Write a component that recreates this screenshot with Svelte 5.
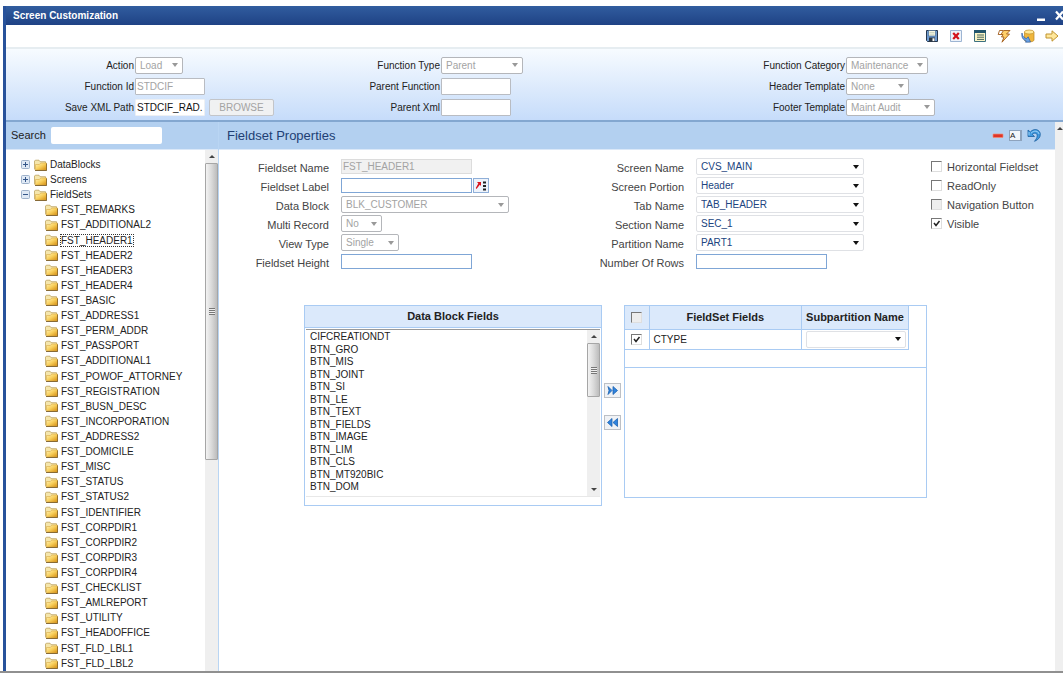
<script lang="ts">
  /**
   * Screen Customization: header form, object tree and fieldset properties.
   */
  type Option = { id: string; label: string; value: string; width: number };

  const roots = ['DataBlocks', 'Screens', 'FieldSets'];
  const fieldsets = [
    'FST_REMARKS', 'FST_ADDITIONAL2', 'FST_HEADER1', 'FST_HEADER2', 'FST_HEADER3',
    'FST_HEADER4', 'FST_BASIC', 'FST_ADDRESS1', 'FST_PERM_ADDR', 'FST_PASSPORT',
    'FST_ADDITIONAL1', 'FST_POWOF_ATTORNEY', 'FST_REGISTRATION', 'FST_BUSN_DESC',
    'FST_INCORPORATION', 'FST_ADDRESS2', 'FST_DOMICILE', 'FST_MISC', 'FST_STATUS',
    'FST_STATUS2', 'FST_IDENTIFIER', 'FST_CORPDIR1', 'FST_CORPDIR2', 'FST_CORPDIR3',
    'FST_CORPDIR4', 'FST_CHECKLIST', 'FST_AMLREPORT', 'FST_UTILITY', 'FST_HEADOFFICE',
    'FST_FLD_LBL1', 'FST_FLD_LBL2'
  ];
  const blockFields = [
    'CIFCREATIONDT', 'BTN_GRO', 'BTN_MIS', 'BTN_JOINT', 'BTN_SI', 'BTN_LE', 'BTN_TEXT',
    'BTN_FIELDS', 'BTN_IMAGE', 'BTN_LIM', 'BTN_CLS', 'BTN_MT920BIC', 'BTN_DOM'
  ];
  const templates: Option[] = [
    { id: 'category', label: 'Function Category', value: 'Maintenance', width: 82 },
    { id: 'header-tpl', label: 'Header Template', value: 'None', width: 63 },
    { id: 'footer-tpl', label: 'Footer Template', value: 'Maint Audit', width: 89 }
  ];
  const blockOptions: Option[] = [
    { id: 'data-block', label: 'Data Block', value: 'BLK_CUSTOMER', width: 168 },
    { id: 'multi-record', label: 'Multi Record', value: 'No', width: 41 },
    { id: 'view-type', label: 'View Type', value: 'Single', width: 58 }
  ];
  const placement = [
    { id: 'screen-name', label: 'Screen Name', value: 'CVS_MAIN' },
    { id: 'screen-portion', label: 'Screen Portion', value: 'Header' },
    { id: 'tab-name', label: 'Tab Name', value: 'TAB_HEADER' },
    { id: 'section-name', label: 'Section Name', value: 'SEC_1' },
    { id: 'partition-name', label: 'Partition Name', value: 'PART1' }
  ];

  let selected = $state('FST_HEADER1');
  let flags = $state([
    { label: 'Horizontal Fieldset', on: false, disabled: false },
    { label: 'ReadOnly', on: false, disabled: false },
    { label: 'Navigation Button', on: false, disabled: true },
    { label: 'Visible', on: true, disabled: false }
  ]);
</script>

{#snippet folder()}
  <svg class="folder" viewBox="0 0 13 12" aria-hidden="true">
    <defs>
      <linearGradient id="fold" x1="0" y1="0" x2="1" y2="1">
        <stop offset="0" stop-color="#fff3b8" />
        <stop offset=".5" stop-color="#f8cf5c" />
        <stop offset="1" stop-color="#d48c10" />
      </linearGradient>
    </defs>
    <path d="M.5 10.5V2L1.300 1.200H5l1 1.500h5.500v2" fill="#f5e6ac" stroke="#b59a52" stroke-width=".7" />
    <path d="M1.500 11V5.500h3.800L6.800 4h5.700v7z" fill="url(#fold)" stroke="#d9a945" stroke-width=".6" />
    <path d="M1 11.500h11.700V4.500" fill="none" stroke="#6b4a10" stroke-width=".8" />
  </svg>
{/snippet}

<main class="screen">
  <div class="window">
    <header class="titlebar">
      <h1>Screen Customization</h1>
      <button type="button" class="plain" aria-label="Minimize">
        <svg width="8" height="12" viewBox="0 0 8 12"><path d="M0 8.5h8v2.5H0z" fill="#fff" /></svg>
      </button>
      <button type="button" class="plain" aria-label="Close">
        <svg width="8" height="12" viewBox="0 0 8 12"><path d="m1 1.500 7 8m0-8-7 8" stroke="#fff" stroke-width="2.2" /></svg>
      </button>
    </header>

    <nav class="toolbar" aria-label="Actions">
      <button type="button" class="plain" aria-label="Save">
        <svg width="14" height="14" viewBox="0 0 14 14">
          <path d="M1.500 1.500h11v11h-10l-1-1z" fill="#6f9bd0" stroke="#24374f" />
          <path d="M3.500 1.500h7v5.500h-7z" fill="#f5f6e2" stroke="#38608f" stroke-width=".6" />
          <path d="M4.500 3.500h5m-5 1.700h5" stroke="#b5c2b0" stroke-width=".6" />
          <path d="M4 8.500h6v4H4z" fill="#2c3640" /><path d="M7.500 9.300h2v2.800h-2z" fill="#fff" />
        </svg>
      </button>
      <button type="button" class="plain" aria-label="Delete">
        <svg width="14" height="14" viewBox="0 0 14 14">
          <path d="M1.500 1.500h11v11h-11z" fill="#eef3fa" stroke="#9db5d3" />
          <path d="m4.200 4 5.600 6m0-6-5.600 6" stroke="#d3121b" stroke-width="2.200" />
        </svg>
      </button>
      <button type="button" class="plain" aria-label="Properties">
        <svg width="14" height="14" viewBox="0 0 14 14">
          <path d="M1.500 1.500h11v11h-11z" fill="#fdf5c6" stroke="#3c7080" />
          <path d="M1 1h12v3H1z" fill="#24566d" />
          <path d="M4 6h7M4 8.200h7M4 10.400h7" stroke="#47665f" />
        </svg>
      </button>
      <button type="button" class="plain" aria-label="Generate">
        <svg width="14" height="14" viewBox="0 0 14 14">
          <path d="M6.500 1.500H13L9.500 5h3L5 13.200 7 8H4.500L6 5.500H4z" fill="#ffd06a" stroke="#a05a18" stroke-width=".9" stroke-linejoin="round" />
          <path d="M6 1.500H2.500L1.200 5.500H4" fill="none" stroke="#a05a18" stroke-width=".9" />
        </svg>
      </button>
      <button type="button" class="plain" aria-label="Load from database">
        <svg width="14" height="14" viewBox="0 0 14 14">
          <path d="M3.500 3v8c0 2.500 9.500 2.500 9.500 0V3z" fill="#efb63c" stroke="#b98420" stroke-width=".7" />
          <ellipse cx="8.200" cy="3" rx="4.800" ry="2" fill="#ffe99a" stroke="#c08c24" stroke-width=".7" />
          <path d="M1 4c.5 3.500 2 5 4.500 5.500l1.700-1.700L9.500 13l-5 .2L5.300 12C2 11 .2 8 1 4z" fill="#6aa2e4" stroke="#2c5fa8" stroke-width=".7" />
        </svg>
      </button>
      <button type="button" class="plain" aria-label="Next">
        <svg width="14" height="14" viewBox="0 0 14 14">
          <path d="M1 5h6V1.800L13 7l-6 5.200V9H1z" fill="#ffe79a" stroke="#c09430" />
        </svg>
      </button>
    </nav>

    <form class="general">
      <div class="fields">
        <label for="action">Action</label>
        <select id="action" disabled style:width="48px"><option>Load</option></select>
        <label for="function-id">Function Id</label>
        <input id="function-id" type="text" value="STDCIF" disabled />
        <label for="xml-path">Save XML Path</label>
        <div class="pair">
          <input id="xml-path" type="text" value="STDCIF_RAD." />
          <button type="button" class="browse" disabled>BROWSE</button>
        </div>
      </div>
      <div class="fields">
        <label for="function-type">Function Type</label>
        <select id="function-type" disabled style:width="82px"><option>Parent</option></select>
        <label for="parent-function">Parent Function</label>
        <input id="parent-function" type="text" disabled />
        <label for="parent-xml">Parent Xml</label>
        <input id="parent-xml" type="text" disabled />
      </div>
      <div class="fields">
        {#each templates as t (t.id)}
          <label for={t.id}>{t.label}</label>
          <select id={t.id} disabled style:width="{t.width}px"><option>{t.value}</option></select>
        {/each}
      </div>
    </form>

    <div class="body">
      <aside>
        <div class="strip">
          <label for="search">Search</label>
          <input id="search" type="search" />
        </div>
        <div class="tree">
          <ul>
            {#each roots as root (root)}
              <li>
                <svg class="expander" viewBox="0 0 9 9" aria-hidden="true">
                  <rect x=".5" y=".5" width="8" height="8" rx="1" fill="#dfe9f5" stroke="#9fb2cb" />
                  <path d={root === 'FieldSets' ? 'M2 4.5h5' : 'M2 4.5h5M4.5 2v5'} stroke="#35578a" />
                </svg>
                {@render folder()}
                <button type="button" class="node">{root}</button>
              </li>
            {/each}
            {#each fieldsets as name (name)}
              <li class="child">
                {@render folder()}
                <button
                  type="button"
                  class="node"
                  class:selected={name === selected}
                  onclick={() => (selected = name)}
                >{name}</button>
              </li>
            {/each}
          </ul>
          <div class="scrollbar" aria-hidden="true">
            <i class="up"></i>
            <div class="thumb"><i class="grip"></i></div>
          </div>
        </div>
      </aside>

      <section class="details">
        <div class="strip heading">
          <h2>Fieldset Properties</h2>
          <button type="button" class="plain" aria-label="Remove">
            <svg width="12" height="14" viewBox="0 0 12 14"><rect x="1" y="6" width="10" height="3.500" rx=".5" fill="#df3528" stroke="#f28c72" stroke-width=".7" /></svg>
          </button>
          <button type="button" class="plain rename" aria-label="Rename"><span>A</span></button>
          <button type="button" class="plain" aria-label="Undo">
            <svg width="14" height="14" viewBox="0 0 14 14">
              <path d="M1 2v6.500h6.500L5.300 6.200C8 4 10.500 5.500 10.200 8c-.2 2-1.200 3.500-2.700 5.300C11 12 13.300 9.500 13.300 6.500c0-5-6.300-6.800-10-2.500z" fill="#3f9ae0" stroke="#1c5f9f" stroke-width=".8" />
              <path d="M2 4v3.300M4 5.200C7 2 11.500 2.800 12 6" fill="none" stroke="#a5d6f8" stroke-width=".9" />
            </svg>
          </button>
        </div>

        <form class="properties">
          <div class="fields">
            <label for="fs-name">Fieldset Name</label>
            <input id="fs-name" class="readonly" type="text" value="FST_HEADER1" disabled />
            <label for="fs-label">Fieldset Label</label>
            <div class="pair lookup">
              <input id="fs-label" type="text" />
              <button type="button" aria-label="Look up label">
                <svg width="13" height="12" viewBox="0 0 13 12">
                  <path d="M2 2h4v4L4.800 4.800 1.500 9 .8 8l2.500-4.500z" fill="#d8141c" />
                  <path d="M8 1.500h3v2H8zM8 5h3v2H8zM8 8.500h3v2H8z" fill="#222" />
                </svg>
              </button>
            </div>
            {#each blockOptions as o (o.id)}
              <label for={o.id}>{o.label}</label>
              <select id={o.id} disabled style:width="{o.width}px"><option>{o.value}</option></select>
            {/each}
            <label for="fs-height">Fieldset Height</label>
            <input id="fs-height" type="text" />
          </div>
          <div class="fields">
            {#each placement as p (p.id)}
              <label for={p.id}>{p.label}</label>
              <select id={p.id} class="live"><option>{p.value}</option></select>
            {/each}
            <label for="rows">Number Of Rows</label>
            <input id="rows" type="text" />
          </div>
          <div class="flags">
            {#each flags as flag (flag.label)}
              <label>
                <input type="checkbox" bind:checked={flag.on} disabled={flag.disabled} />
                {flag.label}
              </label>
            {/each}
          </div>
        </form>

        <div class="transfer">
          <div class="source">
            <h3 id="source-title">Data Block Fields</h3>
            <div class="listbox">
              <select multiple aria-labelledby="source-title">
                {#each blockFields as f (f)}
                  <option>{f}</option>
                {/each}
              </select>
              <div class="scrollbar" aria-hidden="true">
                <i class="up"></i>
                <div class="thumb"><i class="grip"></i></div>
                <i class="down"></i>
              </div>
            </div>
          </div>
          <div class="moves">
            <button type="button" aria-label="Add to fieldset">
              <svg width="11" height="9" viewBox="0 0 11 9"><path d="m1 .5 4 4-4 4 1-4zM6 .5l4.500 4-4.500 4z" fill="#2f83dd" stroke="#1c62b0" stroke-width=".8" /></svg>
            </button>
            <button type="button" aria-label="Remove from fieldset">
              <svg width="11" height="9" viewBox="0 0 11 9"><path d="M5 .5v8l-4.500-4zM10.500.5v8L6 4.500z" fill="#2f83dd" stroke="#1c62b0" stroke-width=".8" /></svg>
            </button>
          </div>
          <div class="target">
            <table>
              <thead>
                <tr>
                  <th class="tick"><input type="checkbox" aria-label="Select all" disabled /></th>
                  <th>FieldSet Fields</th>
                  <th class="sub">Subpartition Name</th>
                </tr>
              </thead>
              <tbody>
                <tr>
                  <td class="tick"><input type="checkbox" aria-label="Select CTYPE" checked /></td>
                  <td>CTYPE</td>
                  <td class="sub"><select class="live" aria-label="Subpartition name"><option></option></select></td>
                </tr>
              </tbody>
            </table>
            <div class="filler"></div>
          </div>
        </div>
      </section>

      <div class="scrollbar outer" aria-hidden="true"><i class="up"></i></div>
    </div>
  </div>
</main>

<style>
  :global(body) {
    background: #fff;
    font-family: 'Liberation Sans', Arial, sans-serif;
    font-size: 10px;
    color: #222;
  }

  .screen {
    box-sizing: border-box;
    min-height: 100vh;
    padding: 6px 0 0 3px;
    border-bottom: 2px solid #909090;
    display: flex;
    overflow: hidden;
  }

  .window {
    flex: 1;
    min-width: 0;
    border-left: 3px solid #28529b;
    display: flex;
    flex-direction: column;
  }

  h1,
  h2,
  h3 {
    margin: 0;
  }

  button,
  input,
  select {
    box-sizing: border-box;
    font: inherit;
    margin: 0;
  }

  .plain {
    display: block;
    border: 0;
    padding: 0;
    background: none;
    line-height: 0;
  }

  .titlebar {
    height: 19px;
    padding-left: 7px;
    display: flex;
    align-items: center;
    gap: 10px;
    background: linear-gradient(#315d9f, #1f4285);
    color: #fff;
  }

  .titlebar h1 {
    flex: 1;
    font-size: 10px;
    line-height: 16px;
  }

  .toolbar {
    height: 22px;
    padding-right: 4px;
    border-bottom: 2px solid #e6edf1;
    display: flex;
    justify-content: flex-end;
    align-items: center;
    gap: 10px;
    background: #fff;
  }

  .general {
    display: grid;
    grid-template-columns: 306fr 405fr 346fr;
    padding: 7px 0 4px;
    border-bottom: 2px solid #83a7d0;
    background: linear-gradient(#f7fbff, #c6dcfa);
  }

  .fields {
    display: grid;
    grid-template-columns: 128px 1fr;
    grid-auto-rows: 18px;
    row-gap: 3px;
    column-gap: 1px;
    align-items: center;
    justify-items: start;
  }

  .fields label {
    justify-self: end;
    white-space: nowrap;
  }

  input[type='text'] {
    width: 70px;
    height: 17px;
    padding: 0 1px;
    border: 1px solid #b9bcc2;
    border-radius: 1px;
    background: #fff;
    color: #111;
  }

  .general .pair input {
    border-color: #eef0f3;
  }

  input:disabled,
  select:disabled {
    color: #a3a3a3;
    opacity: 1;
  }

  select {
    appearance: none;
    height: 17px;
    padding: 0 14px 0 4px;
    border: 1px solid #b4b6ba;
    border-radius: 2px;
    background: #fff url("data:image/svg+xml,%3Csvg xmlns='http://www.w3.org/2000/svg' width='6' height='4'%3E%3Cpath d='M0 0h6L3 4z' fill='%23999'/%3E%3C/svg%3E") no-repeat right 4px center;
  }

  select.live {
    width: 168px;
    border-color: #dfe1e5;
    color: #204480;
    background-image: url("data:image/svg+xml,%3Csvg xmlns='http://www.w3.org/2000/svg' width='6' height='4'%3E%3Cpath d='M0 0h6L3 4z' fill='%23111'/%3E%3C/svg%3E");
  }

  .pair {
    display: flex;
    gap: 4px;
  }

  .browse {
    width: 65px;
    height: 17px;
    padding: 0;
    border: 1px solid #c3c5c9;
    border-radius: 2px;
    background: #f0f1f2;
    color: #a3a3a3;
  }

  .body {
    flex: 1;
    display: flex;
  }

  aside {
    width: 212px;
    display: flex;
    flex-direction: column;
    border-right: 1px solid #b9d5f3;
  }

  .strip {
    box-sizing: border-box;
    height: 28px;
    padding: 0 5px 1px;
    border-bottom: 1px solid #dbe8f8;
    display: flex;
    align-items: center;
    gap: 5px;
    background: #b3d0f0;
    font-size: 11px;
  }

  .strip input {
    width: 111px;
    height: 17px;
    border: 0;
    border-radius: 2px;
    background: #fff;
  }

  .tree {
    flex: 1;
    display: flex;
  }

  .tree ul {
    flex: 1;
    margin: 0;
    padding: 7px 0 0 15px;
    list-style: none;
    display: flex;
    flex-direction: column;
    justify-content: space-between;
  }

  .tree li {
    display: flex;
    align-items: center;
    gap: 2px;
    height: 15px;
  }

  .tree li.child {
    padding-left: 24px;
  }

  .folder {
    width: 13px;
    height: 12px;
  }

  .expander {
    width: 9px;
    height: 9px;
    margin-right: 2px;
  }

  .node {
    border: 1px solid transparent;
    padding: 0;
    background: none;
    color: #222;
    line-height: 11px;
    white-space: nowrap;
  }

  .node.selected {
    border: 1px dotted #333;
  }

  .scrollbar {
    width: 13px;
    flex: none;
    display: flex;
    flex-direction: column;
    align-items: center;
    background: #efefef;
  }

  .up,
  .down {
    margin: 5px 0;
    border: 3px solid transparent;
  }

  .up {
    border-top: 0;
    border-bottom-color: #444;
  }

  .down {
    margin-top: auto;
    border-bottom: 0;
    border-top-color: #444;
  }

  .thumb {
    box-sizing: border-box;
    width: 100%;
    height: 57%;
    border: 1px solid #a6a6a6;
    border-radius: 1px;
    display: grid;
    place-items: center;
    background: linear-gradient(90deg, #f3f3f3, #dadada 50%, #bcbcbc);
  }

  .grip {
    width: 6px;
    height: 7px;
    background: repeating-linear-gradient(#777 0 1px, #eee 1px 2px);
  }

  .outer {
    width: 8px;
    align-items: flex-end;
  }

  .details {
    flex: 1;
    min-width: 0;
  }

  .heading {
    padding: 0 14px 1px 8px;
  }

  .heading h2 {
    flex: 1;
    font-size: 13px;
    font-weight: 400;
    color: #213f74;
  }

  .rename {
    width: 13px;
    height: 11px;
    border: 1px solid #8ea3bd;
    border-right-width: 2px;
    background: #f3f6fa;
    color: #222;
    font-size: 8px;
    line-height: 9px;
    text-align: left;
  }

  .properties {
    display: grid;
    grid-template-columns: 355fr 357fr 124fr;
    padding-top: 8px;
    color: #444;
  }

  .properties .fields {
    grid-template-columns: 110px 1fr;
    grid-auto-rows: 17px;
    row-gap: 2px;
    column-gap: 12px;
  }

  .properties .fields label {
    padding-top: 3px;
    font-size: 11px;
    line-height: 14px;
  }

  .properties input[type='text'] {
    width: 131px;
    height: 15px;
    border-color: #7fa6d6;
    border-radius: 0;
  }

  .properties .readonly:disabled {
    border-color: #dcdcdc;
    background: #f1f1f1;
  }

  .properties .lookup {
    gap: 1px;
  }

  .lookup button {
    width: 16px;
    height: 15px;
    padding: 0;
    border: 1px solid #8fafd8;
    background: #eef3fb;
    line-height: 0;
  }

  .flags {
    display: grid;
    grid-auto-rows: 17px;
    gap: 2px;
    align-content: start;
  }

  .flags label {
    display: flex;
    align-items: center;
    gap: 5px;
    font-size: 11px;
    white-space: nowrap;
  }

  input[type='checkbox'] {
    appearance: none;
    flex: none;
    width: 11px;
    height: 11px;
    border: 1px solid #dedede;
    border-top-color: #777;
    border-left-color: #777;
    background: #fff;
  }

  input[type='checkbox']:disabled {
    background: #ededed;
  }

  input[type='checkbox']:checked {
    background: #fff url("data:image/svg+xml,%3Csvg xmlns='http://www.w3.org/2000/svg' width='9' height='9'%3E%3Cpath d='M2 4l2 2.500 3.500-4.500' fill='none' stroke='%23222' stroke-width='1.500'/%3E%3C/svg%3E");
  }

  .transfer {
    display: grid;
    grid-template-columns: 298fr 22px 303fr;
    align-items: start;
    padding: 35px 128px 0 85px;
  }

  .source,
  .target {
    box-sizing: border-box;
    border: 1px solid #a9cbf3;
  }

  .source {
    padding-bottom: 8px;
  }

  .source h3 {
    height: 21px;
    border-bottom: 1px solid #a9cbf3;
    background: #dbe9fb;
    font-size: 11px;
    line-height: 21px;
    text-align: center;
  }

  .listbox {
    display: flex;
    margin: 1px 1px 0;
    border-top: 1px solid #999;
    border-bottom: 1px solid #e8e8e8;
  }

  .listbox select {
    flex: 1;
    min-width: 0;
    height: 166px;
    padding: 1px 0 0;
    border: 0;
    overflow: hidden;
    background: #fff;
    color: #222;
  }

  /* rows alternate 13px and 12px, so that thirteen fill the box */
  .listbox option {
    min-height: 0;
    padding: 0 4px 1px;
    font-size: 10px;
  }

  .listbox option:nth-child(odd) {
    padding-bottom: 2px;
  }

  .listbox .thumb {
    height: 54px;
  }

  .moves {
    display: grid;
    gap: 17px;
    padding: 78px 3px 0 2px;
  }

  .moves button {
    height: 15px;
    padding: 0;
    border: 1px solid #bcc0c6;
    background: #f0f2f5;
    line-height: 0;
  }

  .target {
    height: 193px;
  }

  table {
    width: calc(100% - 17px);
    border-collapse: collapse;
    table-layout: fixed;
  }

  th,
  td {
    box-sizing: border-box;
    padding: 0;
    border-right: 1px solid #a9cbf3;
    border-bottom: 1px solid #a9cbf3;
  }

  th {
    height: 23px;
    background: #dbe9fb;
    font-size: 11px;
    white-space: nowrap;
  }

  td {
    height: 20px;
    padding-left: 4px;
  }

  .tick {
    width: 24px;
    padding: 0;
    text-align: center;
  }

  .tick input {
    display: block;
    margin: 0 auto;
  }

  .sub {
    width: 107px;
  }

  td.sub select {
    display: block;
    width: 100px;
  }

  .filler {
    height: 17px;
    border-bottom: 1px solid #a9cbf3;
  }
</style>
